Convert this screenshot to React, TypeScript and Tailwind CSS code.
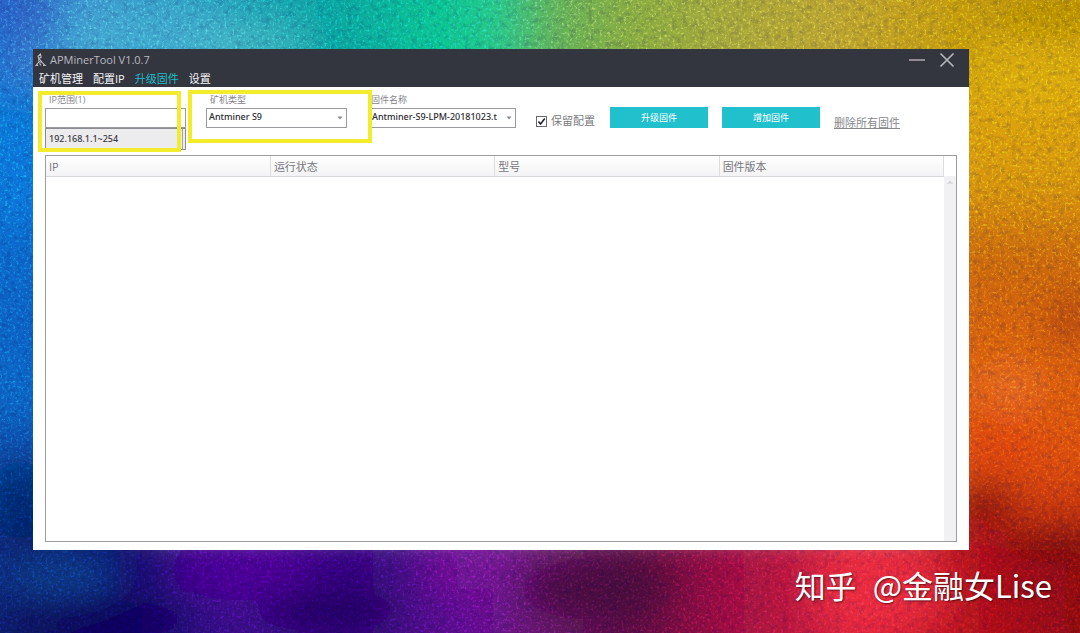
import type { ReactNode } from "react";

const tabs = ["矿机管理", "配置IP", "升级固件", "设置"];
const columns = ["IP", "运行状态", "型号", "固件版本"];

type Blob = { x: number; y: number; rx: number; ry: number; c: string; o?: number };

const blobs: Blob[] = [
  { x: 150, y: 40, rx: 90, ry: 34, c: "#46aed2", o: 0.7 },
  { x: 250, y: 45, rx: 60, ry: 20, c: "#4fbfc6", o: 0.6 },
  { x: 20, y: 10, rx: 40, ry: 24, c: "#2c5bc4", o: 0.7 },
  { x: 15, y: 170, rx: 40, ry: 60, c: "#0a7be0", o: 0.7 },
  { x: 15, y: 390, rx: 24, ry: 40, c: "#0a6fd0", o: 0.5 },
  { x: 60, y: 575, rx: 60, ry: 26, c: "#12418c", o: 0.8 },
  { x: 20, y: 500, rx: 30, ry: 40, c: "#04245f", o: 0.7 },
  { x: 100, y: 620, rx: 90, ry: 20, c: "#0c0450", o: 0.8 },
  { x: 240, y: 570, rx: 70, ry: 30, c: "#4c0595", o: 0.8 },
  { x: 330, y: 610, rx: 70, ry: 20, c: "#1d0455", o: 0.8 },
  { x: 470, y: 570, rx: 50, ry: 20, c: "#7a1496", o: 0.7 },
  { x: 600, y: 590, rx: 80, ry: 30, c: "#420838", o: 0.8 },
  { x: 880, y: 590, rx: 70, ry: 40, c: "#f0303f", o: 0.8 },
  { x: 1030, y: 70, rx: 60, ry: 40, c: "#e2b008", o: 0.7 },
  { x: 1050, y: 20, rx: 60, ry: 18, c: "#b08a04", o: 0.6 },
  { x: 1010, y: 390, rx: 30, ry: 30, c: "#ef7222", o: 0.6 },
  { x: 1000, y: 445, rx: 40, ry: 30, c: "#e04408", o: 0.8 },
  { x: 985, y: 505, rx: 30, ry: 22, c: "#7a0c10", o: 0.8 },
  { x: 1070, y: 320, rx: 22, ry: 30, c: "#a53a06", o: 0.6 },
  { x: 1060, y: 545, rx: 60, ry: 18, c: "#6c0508", o: 0.7 },
];

function Wallpaper() {
  return (
    <svg
      aria-hidden="true"
      viewBox="0 0 1080 633"
      preserveAspectRatio="none"
      className="absolute inset-0 -z-10 h-full w-full"
    >
      <defs>
        <linearGradient id="top">
          <stop offset="0" stopColor="#2c68cc" />
          <stop offset="0.08" stopColor="#3f98d2" />
          <stop offset="0.2" stopColor="#2aa3bf" />
          <stop offset="0.32" stopColor="#0aa79f" />
          <stop offset="0.4" stopColor="#08c493" />
          <stop offset="0.46" stopColor="#25c98a" />
          <stop offset="0.51" stopColor="#62b45a" />
          <stop offset="0.58" stopColor="#86ad42" />
          <stop offset="0.68" stopColor="#a9a83a" />
          <stop offset="0.78" stopColor="#bea530" />
          <stop offset="0.88" stopColor="#c69c10" />
          <stop offset="1" stopColor="#c09405" />
        </linearGradient>
        <linearGradient id="bottom">
          <stop offset="0" stopColor="#0a1c66" />
          <stop offset="0.1" stopColor="#0c0c66" />
          <stop offset="0.22" stopColor="#3d0788" />
          <stop offset="0.34" stopColor="#34067a" />
          <stop offset="0.44" stopColor="#650f92" />
          <stop offset="0.5" stopColor="#69186c" />
          <stop offset="0.58" stopColor="#5a0b42" />
          <stop offset="0.68" stopColor="#a01040" />
          <stop offset="0.8" stopColor="#e02438" />
          <stop offset="0.9" stopColor="#b5121b" />
          <stop offset="1" stopColor="#8e0a10" />
        </linearGradient>
        <linearGradient id="left" x2="0" y2="1">
          <stop offset="0" stopColor="#2c68cc" />
          <stop offset="0.2" stopColor="#1078d4" />
          <stop offset="0.4" stopColor="#0a69cc" />
          <stop offset="0.6" stopColor="#0b5fc0" />
          <stop offset="0.75" stopColor="#08398e" />
          <stop offset="1" stopColor="#0b1460" />
        </linearGradient>
        <linearGradient id="right" x2="0" y2="1">
          <stop offset="0" stopColor="#bc9206" />
          <stop offset="0.15" stopColor="#dba80a" />
          <stop offset="0.32" stopColor="#d99708" />
          <stop offset="0.42" stopColor="#cc6808" />
          <stop offset="0.55" stopColor="#db600f" />
          <stop offset="0.68" stopColor="#df4f10" />
          <stop offset="0.78" stopColor="#bd2a0e" />
          <stop offset="0.86" stopColor="#8a1010" />
          <stop offset="1" stopColor="#a00a14" />
        </linearGradient>
        <filter id="soft" x="-20%" y="-20%" width="140%" height="140%">
          <feGaussianBlur stdDeviation="16" />
        </filter>
        <filter id="light" x="0" y="0" width="100%" height="100%">
          <feTurbulence type="fractalNoise" baseFrequency="0.37" numOctaves="3" seed="4" />
          <feColorMatrix values="0 0 0 0 1  0 0 0 0 1  0 0 0 0 1  3.2 0 0 0 -1.7" />
        </filter>
        <filter id="dark" x="0" y="0" width="100%" height="100%">
          <feTurbulence type="fractalNoise" baseFrequency="0.17" numOctaves="5" seed="11" />
          <feColorMatrix values="0 0 0 0 0  0 0 0 0 0  0 0 0 0 0.08  2.6 0 0 0 -1.2" />
        </filter>
      </defs>
      <g filter="url(#soft)">
        <rect x="-60" y="-60" width="200" height="760" fill="url(#left)" />
        <rect x="940" y="-60" width="200" height="760" fill="url(#right)" />
        <rect x="0" y="-60" width="1080" height="150" fill="url(#top)" />
        <rect x="0" y="530" width="1080" height="163" fill="url(#bottom)" />
        {blobs.map((b) => (
          <ellipse key={`${b.x}-${b.y}`} cx={b.x} cy={b.y} rx={b.rx} ry={b.ry} fill={b.c} opacity={b.o} />
        ))}
      </g>
      <rect width="1080" height="633" filter="url(#dark)" opacity="0.16" />
      <rect width="1080" height="633" filter="url(#light)" className="mix-blend-overlay" opacity="0.5" />
    </svg>
  );
}

function Logo() {
  return (
    <svg viewBox="0 0 12 14" className="h-3.5 w-3" fill="none" stroke="#b9bbc0" strokeWidth="1.1" aria-hidden="true">
      <path d="M5.4 1 3 3.4l.8 2.2 2.4-1.4L5.4 1Z" />
      <path d="M4 5.6 3.8 9 1 12.4h2.2M3.8 8.6l3 .6 3.4 3.2H8" />
      <path d="M4.4 6.2 7 8.8M4.6 10.4l1.4 2" />
    </svg>
  );
}

function Combo({
  id,
  label,
  options,
  width,
  labelPad,
  children,
}: {
  id: string;
  label: string;
  options: string[];
  width: string;
  labelPad: string;
  children?: ReactNode;
}) {
  return (
    <div className={`relative shrink-0 ${width}`}>
      <label htmlFor={id} className={`block h-4 text-[9px] leading-4 text-[#85858b] ${labelPad}`}>
        {label}
      </label>
      <div className="relative">
        <select
          id={id}
          className="block h-5 w-full appearance-none border border-[#9a9aa0] bg-white pr-4 pb-0.5 pl-0.5 font-['Noto_Sans','Noto_Sans_CJK_SC',sans-serif] text-[9px] leading-4 font-medium text-[#2b2b30]"
        >
          {options.map((o) => (
            <option key={o}>{o}</option>
          ))}
        </select>
        <svg viewBox="0 0 6 4" className="pointer-events-none absolute top-2 right-1 h-1 w-1.5" fill="#8a8a90" aria-hidden="true">
          <path d="M.5 .5h5L3 3.5Z" />
        </svg>
      </div>
      {children}
    </div>
  );
}

export default function App() {
  return (
    <div className="relative isolate flex min-h-screen flex-col overflow-hidden pt-[49px] pr-[111px] pl-[33px] font-['Open_Sans','Noto_Sans_CJK_SC',sans-serif]">
      <Wallpaper />

      <main className="flex flex-1 flex-col bg-white">
        <header className="bg-[#33353f]">
          <div className="flex h-[22px] items-center justify-between pr-3.5 pl-0.5">
            <div className="flex items-center gap-[3px]">
              <Logo />
              <h1 className="text-[11px] leading-4 text-[#b9bbc0]">APMinerTool V1.0.7</h1>
            </div>
            <div className="flex items-center gap-3.5">
              <button aria-label="最小化" className="block">
                <svg viewBox="0 0 16 16" className="h-4 w-4" stroke="#a9a4a6" strokeWidth="1.6">
                  <path d="M0 8h16" />
                </svg>
              </button>
              <button aria-label="关闭" className="block">
                <svg viewBox="0 0 16 16" className="h-4 w-4" stroke="#b4b6bc" strokeWidth="1.7">
                  <path d="M1.5 1.5l13 13M14.5 1.5l-13 13" />
                </svg>
              </button>
            </div>
          </div>
          <nav className="flex h-4 items-center gap-2.5 pl-1.5">
            {tabs.map((t) => (
              <a
                key={t}
                href="#"
                className={`text-[11px] leading-4 ${t === "升级固件" ? "text-[#22bcc6]" : "text-[#f6f6f8]"}`}
              >
                {t}
              </a>
            ))}
          </nav>
        </header>

        <section className="relative flex h-[68px] items-start pt-[5px] pl-3">
          <Combo id="range" label="IP范围(1)" options={[""]} width="w-[141px]" labelPad="pl-1">
            <ul className="absolute top-9 left-0 w-full border border-[#8c8c92] bg-[#ececee]">
              <li className="mr-0.5 h-5 border-r border-[#a5a5aa] pl-[3px] font-['Noto_Sans',sans-serif] text-[9px] leading-5 font-medium text-[#3a3a3f]">
                192.168.1.1~254
              </li>
            </ul>
          </Combo>
          <div className="w-5 shrink-0" />
          <Combo id="model" label="矿机类型" options={["Antminer S9"]} width="w-[141px]" labelPad="pl-1" />
          <div className="w-[22px] shrink-0" />
          <Combo id="firmware" label="固件名称" options={["Antminer-S9-LPM-20181023.t"]} width="w-[147px]" labelPad="pl-0.5" />

          <div className="flex items-start gap-3.5 pt-[15px] pl-5">
            <label className="flex w-[60px] items-center gap-1 pt-1.5 text-[11px] leading-4 whitespace-nowrap text-[#7b7b80]">
              <span className="relative block h-[11px] w-[11px] shrink-0">
                <input type="checkbox" defaultChecked className="peer block h-[11px] w-[11px] appearance-none border border-[#68686c] bg-white" />
                <svg
                  viewBox="0 0 11 11"
                  className="pointer-events-none absolute inset-0 hidden h-full w-full peer-checked:block"
                  fill="none"
                  stroke="#222226"
                  strokeWidth="1.6"
                  aria-hidden="true"
                >
                  <path d="M2.4 5.4 4.6 8 8.8 2.6" />
                </svg>
              </span>
              保留配置
            </label>
            <button className="h-[21px] w-[98px] bg-[#20c0cc] text-[9px] leading-4 text-white">升级固件</button>
            <button className="h-[21px] w-[98px] bg-[#20c0cc] text-[9px] leading-4 text-white">增加固件</button>
            <a href="#" className="pt-2 text-[11px] leading-4 whitespace-nowrap text-[#88888d] underline underline-offset-1">
              删除所有固件
            </a>
          </div>

          <div className="pointer-events-none absolute top-1 left-[5px] h-[61px] w-[143px] border-4 border-[#f2ec2c]" />
          <div className="pointer-events-none absolute top-[3px] left-[155px] h-[53px] w-[184px] border-4 border-[#f2ec2c]" />
        </section>

        <section className="mr-3 mb-2 ml-3 flex flex-1 border border-[#9c9ca2]">
          <div className="flex-1">
            <table className="w-full table-fixed border-collapse">
              <thead>
                <tr className="h-5 border-b border-[#d5d5da] bg-linear-to-b from-white to-[#f3f3f5]">
                  {columns.map((c) => (
                    <th
                      key={c}
                      scope="col"
                      className="border-r border-[#dcdce1] pt-0.5 pb-0 pl-[3px] text-left text-[11px] leading-[18px] font-normal text-[#77777c]"
                    >
                      {c}
                    </th>
                  ))}
                </tr>
              </thead>
              <tbody />
            </table>
          </div>
          <div className="mt-5 flex w-3 justify-center bg-[#f1f1f4] pt-1">
            <svg viewBox="0 0 6 4" className="h-1 w-1.5" fill="#d4d4da" aria-hidden="true">
              <path d="M0 3.7h6L3 .5Z" />
            </svg>
          </div>
        </section>
      </main>

      <footer className="-mr-[111px] flex h-[83px] items-center justify-end pr-7">
        <p className="flex gap-4 pb-3.5 font-['Noto_Sans_CJK_SC',sans-serif] text-[31px] leading-10 text-white [text-shadow:1px_1px_2px_rgba(0,0,0,0.6)]">
          <span>知乎</span>
          <span>@金融女Lise</span>
        </p>
      </footer>
    </div>
  );
}
